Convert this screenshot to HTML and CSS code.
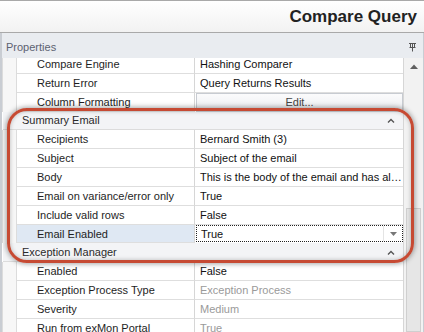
FILE: index.html
```html
<!DOCTYPE html>
<html lang="en">
<head>
    <meta charset="UTF-8">
    <title>Compare Query</title>
    <link rel="stylesheet" href="styles.css">
</head>
<body>
    <div class="titlebar">
        <h1>Compare Query</h1>
    </div>

    <div class="panel">
        <div class="panel-head">
            <span>Properties</span>
            <svg class="pin" width="7" height="10" viewBox="0 0 7 10">
                <path d="M0 1.5h7M1.5 1.5v4h4v-4M3.5 2v3.5M0.5 5.5h6M3.5 5.5v4" fill="none" stroke="#555" stroke-width="1"/>
            </svg>
        </div>

        <div class="grid">
            <div class="rows">
                <div class="row">
                    <div class="gutter"></div>
                    <div class="name">Compare Engine</div>
                    <div class="value">Hashing Comparer</div>
                </div>
                <div class="row">
                    <div class="gutter"></div>
                    <div class="name">Return Error</div>
                    <div class="value">Query Returns Results</div>
                </div>
                <div class="row">
                    <div class="gutter"></div>
                    <div class="name">Column Formatting</div>
                    <div class="value button-cell"><span class="edit">Edit...</span></div>
                </div>

                <div class="category">
                    <span>Summary Email</span>
                    <svg class="chevron" width="8" height="5" viewBox="0 0 8 5"><path d="M1 4.5L4 1.5L7 4.5" fill="none" stroke="#555" stroke-width="1.4"/></svg>
                </div>
                <div class="row">
                    <div class="gutter"></div>
                    <div class="name">Recipients</div>
                    <div class="value">Bernard Smith (3)</div>
                </div>
                <div class="row">
                    <div class="gutter"></div>
                    <div class="name">Subject</div>
                    <div class="value">Subject of the email</div>
                </div>
                <div class="row">
                    <div class="gutter"></div>
                    <div class="name">Body</div>
                    <div class="value">This is the body of the email and has al…</div>
                </div>
                <div class="row">
                    <div class="gutter"></div>
                    <div class="name">Email on variance/error only</div>
                    <div class="value">True</div>
                </div>
                <div class="row">
                    <div class="gutter"></div>
                    <div class="name">Include valid rows</div>
                    <div class="value">False</div>
                </div>
                <div class="row selected">
                    <div class="gutter"></div>
                    <div class="name">Email Enabled</div>
                    <div class="value editor">
                        <span>True</span>
                        <span class="dropdown">
                            <svg width="7" height="4" viewBox="0 0 7 4"><path d="M0 0h7L3.5 4z" fill="#777"/></svg>
                        </span>
                    </div>
                </div>

                <div class="category">
                    <span>Exception Manager</span>
                    <svg class="chevron" width="8" height="5" viewBox="0 0 8 5"><path d="M1 4.5L4 1.5L7 4.5" fill="none" stroke="#555" stroke-width="1.4"/></svg>
                </div>
                <div class="row">
                    <div class="gutter"></div>
                    <div class="name">Enabled</div>
                    <div class="value">False</div>
                </div>
                <div class="row">
                    <div class="gutter"></div>
                    <div class="name">Exception Process Type</div>
                    <div class="value muted">Exception Process</div>
                </div>
                <div class="row">
                    <div class="gutter"></div>
                    <div class="name">Severity</div>
                    <div class="value muted">Medium</div>
                </div>
                <div class="row">
                    <div class="gutter"></div>
                    <div class="name">Run from exMon Portal</div>
                    <div class="value muted">True</div>
                </div>
            </div>

            <div class="scrollbar">
                <svg class="scroll-up" width="8" height="5" viewBox="0 0 8 5"><path d="M0 5L4 0.5L8 5z" fill="#606060"/></svg>
                <div class="thumb"></div>
            </div>

            <div class="highlight"></div>
        </div>
    </div>
</body>
</html>
```

FILE: styles.css
```css
body {
    margin: 0;
    font-family: "Liberation Sans", Arial, sans-serif;
    font-size: 11px;
    color: #1e1e1e;
    background-color: #ffffff;
    width: 424px;
    height: 332px;
    overflow: hidden;
}
.titlebar {
    height: 31px;
    border-top: 1px solid #a9a9a9;
    border-bottom: 1px solid #a9a9a9;
    background: linear-gradient(to bottom, #ffffff, #f2f2f2);
    display: flex;
    justify-content: flex-end;
    align-items: center;
    padding-right: 7px;
}
h1 {
    margin: 0;
    font-size: 17px;
    font-weight: bold;
    color: #222222;
}
.panel {
    border-left: 2px solid #c9cdd3;
    border-right: 1px solid #c9cdd3;
    background-color: #eceef2;
}
.panel-head {
    height: 25px;
    box-sizing: border-box;
    padding: 3px 7px 0 4px;
    display: flex;
    align-items: center;
    justify-content: space-between;
    color: #5c6270;
    font-size: 11px;
    background-color: #e9ecf0;
}
.pin {
    display: block;
}
.grid {
    position: relative;
    display: flex;
    height: 274px;
    overflow: hidden;
    background-color: #ffffff;
}
.rows {
    flex: 1;
    margin-top: -3px;
    border-right: 1px solid #d6d6d6;
}
.row {
    display: grid;
    grid-template-columns: 15px 178px 1fr;
    height: 18.85px;
    box-sizing: border-box;
}
.gutter {
    background-color: #f7f7f7;
    border-left: 1px solid #dcdcdc;
    border-right: 1px solid #dcdcdc;
}
.name,
.value {
    display: flex;
    align-items: center;
    border-bottom: 1px solid #dedede;
    white-space: nowrap;
    overflow: hidden;
}
.name {
    padding-left: 20px;
    border-right: 1px solid #d6d6d6;
}
.value {
    padding-left: 5px;
    color: #111111;
}
.muted {
    color: #9a9a9a;
}
.button-cell {
    padding: 0 0 0 1px;
    border-bottom: none;
}
.edit {
    flex: 1;
    height: 100%;
    display: flex;
    align-items: center;
    justify-content: center;
    box-sizing: border-box;
    border: 1px solid #c7cbd1;
    background: linear-gradient(to bottom, #fbfbfc, #eceef1);
    color: #444444;
}
.category {
    height: 18.85px;
    box-sizing: border-box;
    display: flex;
    align-items: center;
    justify-content: space-between;
    padding: 0 8px 0 19px;
    margin-left: 1px;
    background-color: #f3f4f6;
    border-bottom: 1px solid #dcdcdc;
    color: #2a2a2a;
    font-size: 11px;
}
.selected .name {
    background-color: #dfe8f3;
}
.editor {
    justify-content: space-between;
    padding: 0 0 0 4px;
    border: 1px dotted #222222;
    margin: 0 0 1px 1px;
}
.dropdown {
    width: 18px;
    height: 100%;
    display: flex;
    align-items: center;
    justify-content: center;
    border-left: 1px solid #e4e4e4;
}
.scrollbar {
    width: 19px;
    background-color: #f2f2f2;
    display: flex;
    flex-direction: column;
    align-items: center;
}
.scroll-up {
    margin-top: 6px;
}
.thumb {
    margin-top: 139px;
    width: 15px;
    flex: 1;
    box-sizing: border-box;
    border: 1px solid #cfcfcf;
    background-color: #e6e6e6;
}
.highlight {
    position: absolute;
    left: 5px;
    top: 50px;
    width: 407px;
    height: 155px;
    box-sizing: border-box;
    border: 3px solid #c64a33;
    border-radius: 20px;
    box-shadow: 0 0 5px 1px rgba(0, 0, 0, 0.35), inset 0 0 4px rgba(0, 0, 0, 0.25);
    pointer-events: none;
}
```
